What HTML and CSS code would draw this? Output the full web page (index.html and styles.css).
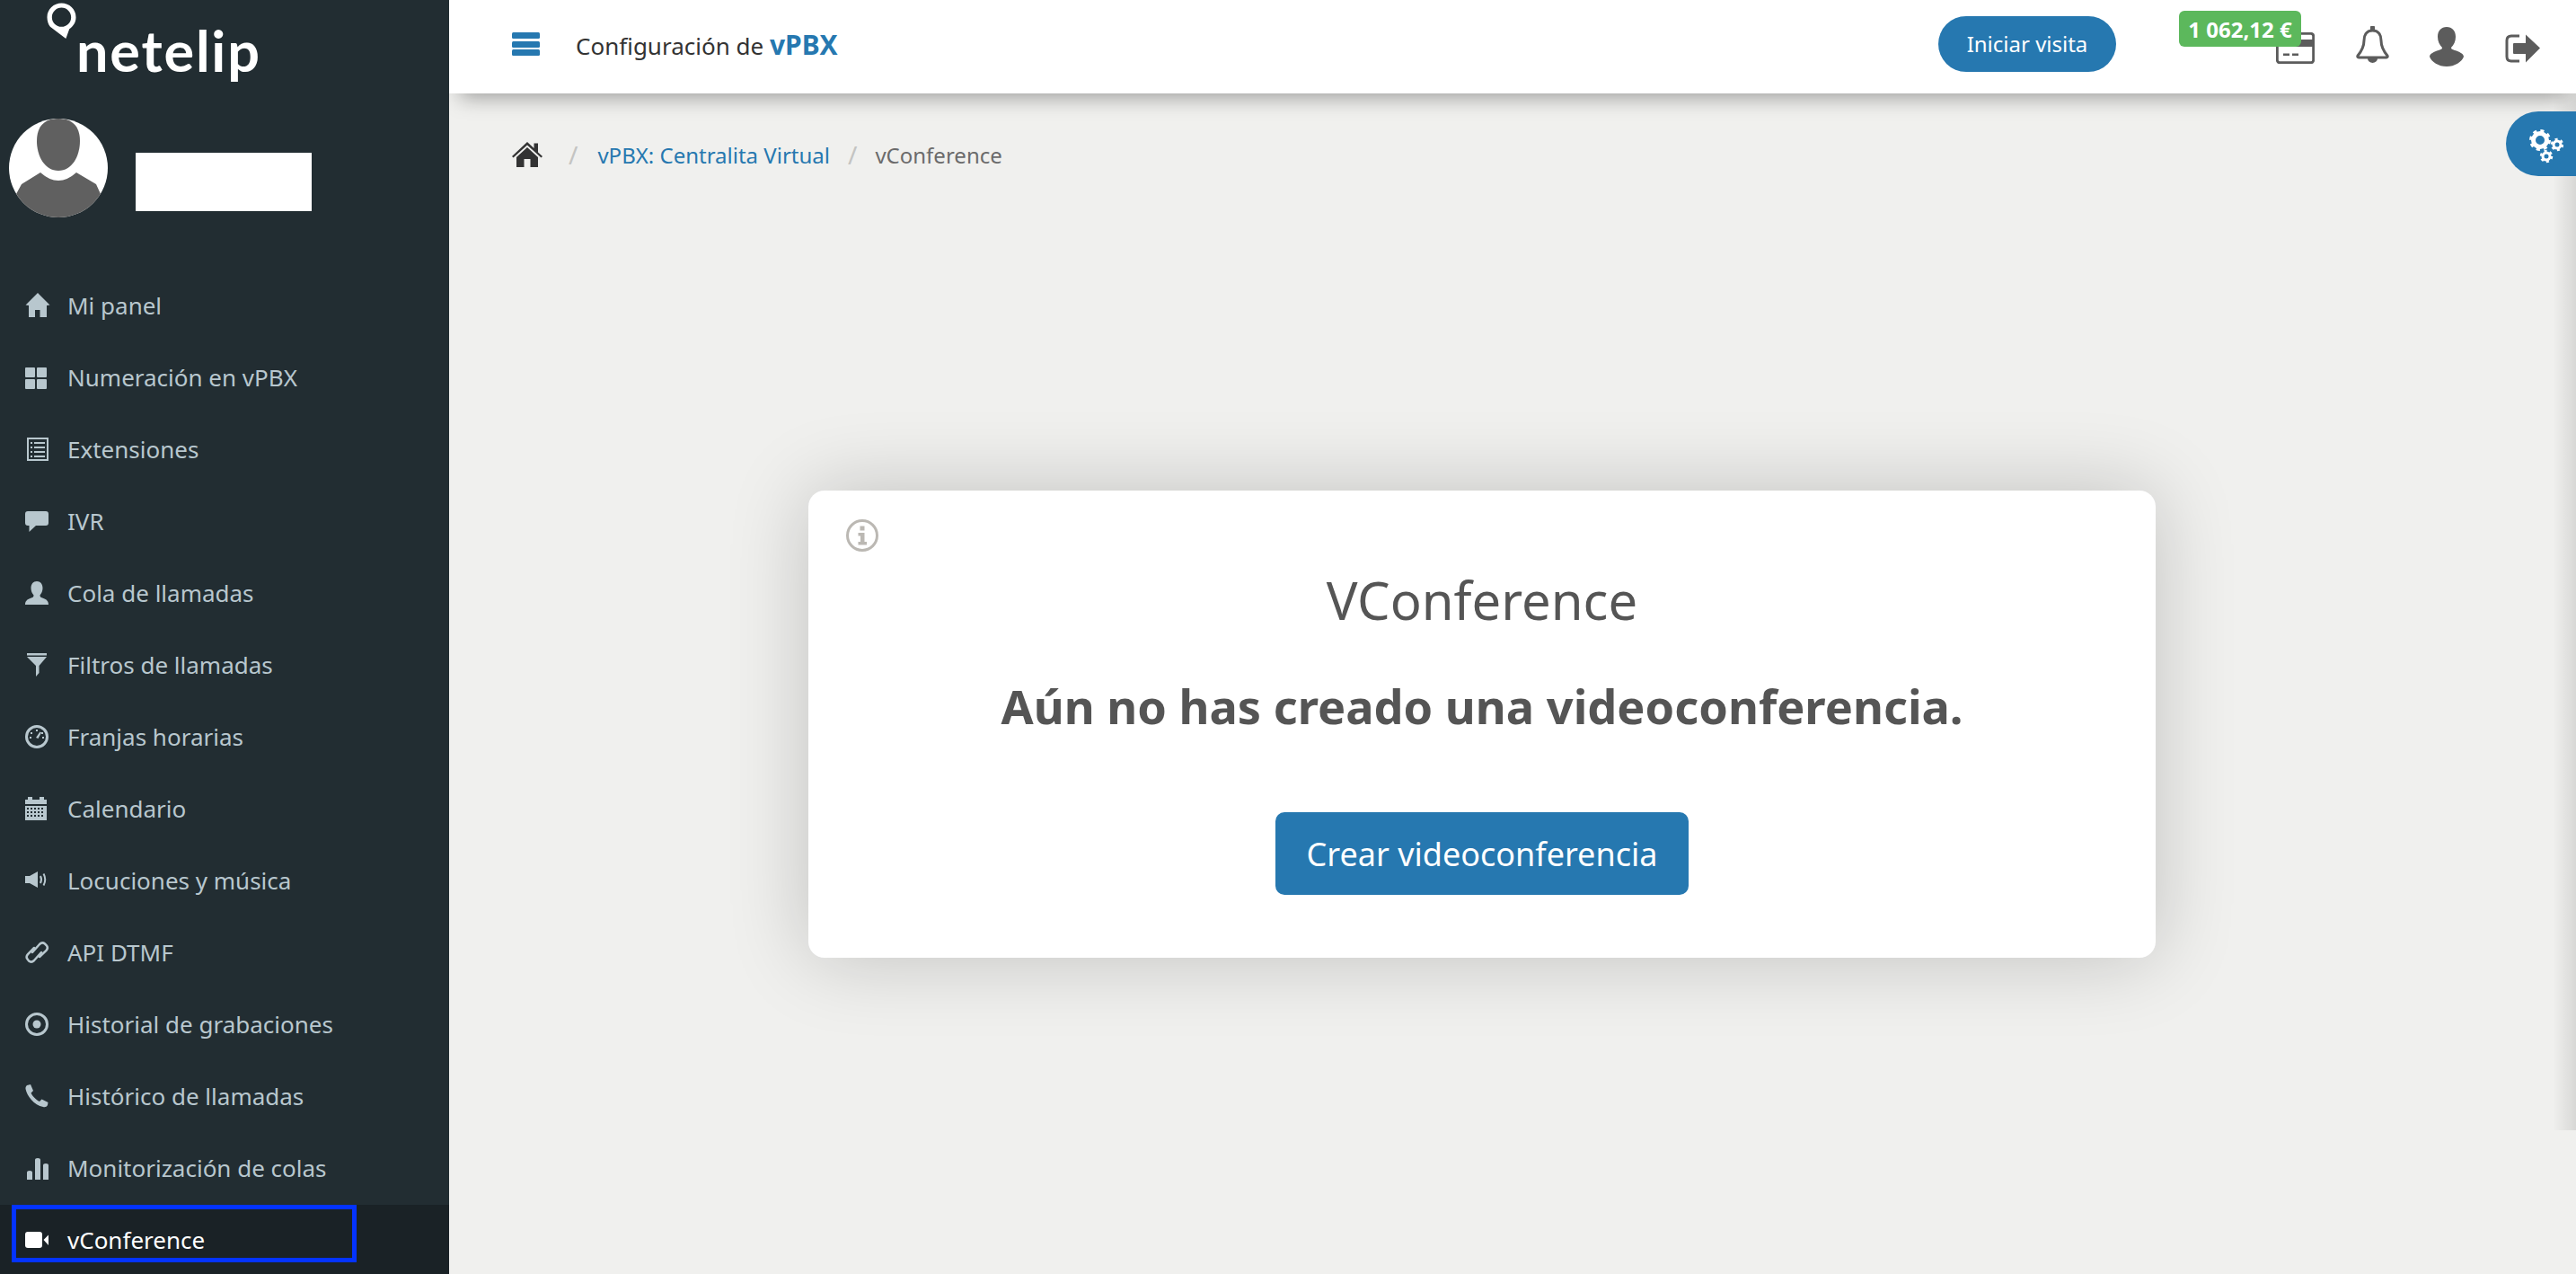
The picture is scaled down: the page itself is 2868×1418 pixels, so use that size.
FILE: index.html
```html
<!DOCTYPE html>
<html lang="es">
<head>
<meta charset="utf-8">
<title>vConference</title>
<link rel="stylesheet" href="styles.css">
</head>
<body>
<div class="app">
  <aside class="sidebar">
    <div class="logo">
      <svg class="logo-pin" viewBox="0 0 34 42"><path d="M17 0.500C26 0.500 33.500 7.500 33.500 16.500C33.500 23 30 27 26 30L22 41L4 27.500C2 24.500 0.500 21 0.500 16.500C0.500 7.500 8 0.500 17 0.500ZM17 5.500C11 5.500 6 10.500 6 16.500C6 22.500 11 27.500 17 27.500C23 27.500 28 22.500 28 16.500C28 10.500 23 5.500 17 5.500Z" fill-rule="evenodd"/></svg>
      <span class="logo-text">netelip</span>
    </div>
    <div class="user">
      <svg class="avatar" viewBox="0 0 110 110">
        <defs><clipPath id="avc"><circle cx="55" cy="55" r="55"/></clipPath></defs>
        <circle cx="55" cy="55" r="55" fill="#fff"/>
        <g clip-path="url(#avc)" fill="#606060">
          <path d="M31 25C31 8 40 0 55 0C70 0 79 8 79 25C79 42 70 58 55 58C40 58 31 42 31 25Z"/>
          <path d="M8 84L14 73L35 60Q55 78 75 60L97 73L102 84V110H8Z"/>
        </g>
      </svg>
      <div class="user-mask"></div>
    </div>
    <nav class="nav">
      <a class="nav-item"><svg class="ico" viewBox="0 0 28 28"><path d="M14 -1L27.500 12.500L24 13V26H16.500V18H11V26H4V13L0.500 12.500Z"/></svg><span>Mi panel</span></a>
      <a class="nav-item"><svg class="ico" viewBox="0 0 28 28"><rect x="0" y="2" width="11" height="11" rx="1"/><rect x="13" y="2" width="11" height="11" rx="1"/><rect x="0" y="15" width="11" height="11" rx="1"/><rect x="13" y="15" width="11" height="11" rx="1"/></svg><span>Numeración en vPBX</span></a>
      <a class="nav-item"><svg class="ico" viewBox="0 0 28 28"><path d="M2 0H26V26H2ZM4 2V24H24V2Z" fill-rule="evenodd"/><path d="M6 5h2v2h-2ZM10 5h12v2h-12ZM6 10h2v2h-2ZM10 10h12v2h-12ZM6 15h2v2h-2ZM10 15h12v2h-12ZM6 20h2v2h-2ZM10 20h12v2h-12Z"/></svg><span>Extensiones</span></a>
      <a class="nav-item"><svg class="ico" viewBox="0 0 28 28"><path d="M3 2H23A3 3 0 0 1 26 5V15A3 3 0 0 1 23 18H12L4.500 25V18H3A3 3 0 0 1 0 15V5A3 3 0 0 1 3 2Z"/></svg><span>IVR</span></a>
      <a class="nav-item"><svg class="ico" viewBox="0 0 28 28"><path d="M13 0C17 0 19.500 3 19.500 7.500C19.500 10.500 18.300 13.500 16.500 15.500C16.500 17.500 17.500 18 20.500 19S26 22 26 26H0C0 22 2.500 20 5.500 19S9.500 17.500 9.500 15.500C7.700 13.500 6.500 10.500 6.500 7.500C6.500 3 9 0 13 0Z"/></svg><span>Cola de llamadas</span></a>
      <a class="nav-item"><svg class="ico" viewBox="0 0 28 28"><path d="M2 0H24V2.500H2ZM2 4H24L15.500 14V22L12 26V14Z"/></svg><span>Filtros de llamadas</span></a>
      <a class="nav-item"><svg class="ico" viewBox="0 0 28 28"><path d="M13 0A13 13 0 1 1 13 26A13 13 0 1 1 13 0ZM13 3A10 10 0 1 0 13 23A10 10 0 1 0 13 3Z" fill-rule="evenodd"/><path d="M12 5h2v2h-2ZM6 8h2v2h-2ZM18 8h2v2h-2ZM5 13h2v2h-2ZM19 13h2v2h-2ZM16.500 7.500L18 8.500L14.500 15L12 14Z"/></svg><span>Franjas horarias</span></a>
      <a class="nav-item"><svg class="ico" viewBox="0 0 28 28"><path d="M0 3H3V0H8V3H16V0H21V3H24V8H0ZM0 10H24V26H0Z"/><path class="ico-cut" d="M2 13h20M2 17h20M2 21h20"/></svg><span>Calendario</span></a>
      <a class="nav-item"><svg class="ico" viewBox="0 0 28 28"><path d="M0 8H5L14 3V21L5 16H0Z"/><path class="ico-line" d="M17 8Q19 12 17 16M20.500 5.500Q24 12 20.500 18.500"/></svg><span>Locuciones y música</span></a>
      <a class="nav-item"><svg class="ico" viewBox="0 0 28 28"><path class="ico-line thick" d="M8 13L16 4Q19 1 22 3.500L24 5.500Q26 8 23.500 11L16 18"/><path class="ico-line thick" d="M18 13L10 22Q7 25 4 22.500L2.500 20.500Q0.500 18 3 15L10 8"/></svg><span>API DTMF</span></a>
      <a class="nav-item"><svg class="ico" viewBox="0 0 28 28"><path d="M13 0A13 13 0 1 1 13 26A13 13 0 1 1 13 0ZM13 3A10 10 0 1 0 13 23A10 10 0 1 0 13 3Z" fill-rule="evenodd"/><circle cx="13" cy="13" r="4.500"/></svg><span>Historial de grabaciones</span></a>
      <a class="nav-item"><svg class="ico" viewBox="0 0 28 28"><path d="M2 1L6 0L9 7L6.500 9.500C8 13 12 17 16 19L18.500 16.500L25.500 20L25 23C24 25 22 25.500 20 25C10 23 2 13 0.500 5C0.200 3 1 2 2 1Z"/></svg><span>Histórico de llamadas</span></a>
      <a class="nav-item"><svg class="ico" viewBox="0 0 28 28"><path d="M2 18Q2 16 5 16T8 18V26H2ZM11 4Q11 2 14 2T17 4V26H11ZM20 10Q20 8 23 8T26 10V26H20Z"/></svg><span>Monitorización de colas</span></a>
      <a class="nav-item active"><svg class="ico" viewBox="0 0 28 28"><rect x="0" y="4" width="19" height="18" rx="3"/><path d="M20.500 13L26 7.500V19Z"/></svg><span>vConference</span></a>
    </nav>
  </aside>

  <div class="main">
    <header class="topbar">
      <button class="menu-btn" aria-label="Menú"><i></i><i></i><i></i></button>
      <div class="page-title">Configuración de <b>vPBX</b></div>
      <a class="visit-btn">Iniciar visita</a>
      <div class="top-icons">
        <div class="wallet">
          <span class="balance">1 062,12 €</span>
          <svg class="ti-card" viewBox="0 0 43 35"><rect x="1.300" y="1.300" width="40.400" height="32.400" rx="3"/><path class="solid" d="M1 8H42V16H1ZM8 23.500H15V26H8ZM18 23.500H25V26H18Z"/></svg>
        </div>
        <svg class="ti-bell" viewBox="0 0 37 41"><path d="M18.500 5C11 5 9 11 9 16C9 23 7 27 2 33C1.500 34 2 35 3 35H34C35 35 35.500 34 35 33C30 27 28 23 28 16C28 11 26 5 18.500 5Z"/><path class="solid" d="M16 1.500A2.500 2.500 0 0 1 21 1.500V5H16ZM13 36H24A5.500 5 0 0 1 13 36Z"/></svg>
        <svg class="ti-user" viewBox="0 0 38 44"><path class="solid" d="M19 0C25 0 29 4 29 11C29 16 27 20 24 23C24 24.500 25 25 28 26C33 27.500 38 30 38 33C36 39 28 44 19 44S2 39 0 33C0 30 5 27.500 10 26C13 25 14 24.500 14 23C11 20 9 16 9 11C9 4 13 0 19 0Z"/></svg>
        <svg class="ti-out" viewBox="0 0 39 32"><path d="M16 2H7Q2 2 2 7V25Q2 30 7 30H16"/><path class="solid" d="M10 10H23V0.500L39 15.500L23 31.500V22H10Q9 22 9 21V11Q9 10 10 10Z"/></svg>
      </div>
    </header>

    <div class="content">
      <ol class="crumbs">
        <li><svg class="crumb-home" viewBox="0 0 34 28"><path d="M17 0L24.500 7V1.500H29V11.500L34 16L32.500 17.500L17 3.500L1.500 17.500L0 16ZM17 6L29 17V28H20.500V19H13.500V28H5V17Z"/></svg></li>
        <li class="sep">/</li>
        <li><a class="crumb-link">vPBX: Centralita Virtual</a></li>
        <li class="sep">/</li>
        <li class="crumb-cur">vConference</li>
      </ol>

      <section class="card">
        <svg class="info" viewBox="0 0 36 36"><circle cx="18" cy="18" r="16.500"/><path class="solid" d="M15.500 7.500h5v5h-5ZM13.500 15h7v10h2.500v3.500H13.500V25H16V18.500H13.500Z"/></svg>
        <h1 class="card-title">VConference</h1>
        <h2 class="card-msg">Aún no has creado una videoconferencia.</h2>
        <a class="create-btn">Crear videoconferencia</a>
      </section>
    </div>

    <div class="edge-shade"></div>
    <div class="gear-tab">
      <svg viewBox="0 0 38 38">
        <circle class="g-ring" cx="12" cy="12" r="7.500"/><circle class="g-teeth" cx="12" cy="12" r="10.500"/>
        <circle class="g-ring s" cx="31" cy="17" r="4"/><circle class="g-teeth s" cx="31" cy="17" r="6"/>
        <circle class="g-ring s" cx="19" cy="30" r="4"/><circle class="g-teeth s" cx="19" cy="30" r="6"/>
      </svg>
    </div>
  </div>
</div>
</body>
</html>
```
FILE: styles.css
```css
*, *::after { box-sizing: border-box; }
html, body { margin: 0; height: 100%; overflow: hidden; }
body { font-family: "Noto Sans", sans-serif; background: #f0f0ee; color: #555; }
a { text-decoration: none; color: inherit; }

.app { display: grid; grid-template-columns: 500px 1fr; height: 100vh; }

/* Sidebar */
.sidebar { background: #222d32; overflow: hidden; display: flex; flex-direction: column; height: 100vh; }
.logo { height: 134px; flex: none; padding-left: 52px; display: flex; align-items: flex-start; }
.logo-pin { width: 33px; height: 41px; margin-top: 3px; fill: #fff; flex: none; }
.logo-text { font-family: "Lato", sans-serif; font-weight: 700; font-size: 63px; line-height: 74px; margin-top: 19px; color: #fff; letter-spacing: 1.800px; }
.user { height: 167px; flex: none; padding-left: 10px; display: flex; align-items: flex-start; }
.avatar { width: 110px; height: 110px; flex: none; margin-top: -2px; }
.user-mask { width: 196px; height: 65px; background: #fff; margin: 36px 0 0 31px; }

.nav { display: flex; flex-direction: column; flex: none; }
.nav-item { height: 80px; flex: none; display: flex; align-items: center; gap: 19px; padding-left: 28px; font-size: 26px; color: #b8c7ce; position: relative; }
.nav-item span { margin-bottom: 3px; }
.ico { width: 28px; height: 28px; flex: none; fill: currentColor; overflow: visible; }
.ico-cut { fill: none; stroke: #222d32; stroke-width: 2; stroke-dasharray: 2 2; }
.ico-line { fill: none; stroke: currentColor; stroke-width: 2; }
.ico-line.thick { stroke-width: 2.500; stroke-linecap: round; }
.nav-item.active { background: #1a2226; color: #fff; }
.nav-item.active::after { content: ""; position: absolute; left: 13px; top: 0; width: 384px; height: 64px; border: 5px solid #0433ff; }

/* Main */
.main { position: relative; display: flex; flex-direction: column; min-width: 0; overflow: hidden; }
.topbar { height: 104px; flex: none; background: #fff; display: flex; align-items: center; padding-left: 70px; position: relative; z-index: 2; box-shadow: 0 16px 22px -12px rgba(0,0,0,.36); }
.menu-btn { width: 31px; height: 26px; padding: 0; border: 0; background: none; display: flex; flex-direction: column; justify-content: space-between; margin: -6px 40px 0 0; flex: none; }
.menu-btn i { display: block; height: 7px; border-radius: 1.500px; background: #2678b0; }
.page-title { font-size: 26px; color: #333; position: relative; top: -1px; }
.page-title b { color: #2678b0; font-weight: 700; font-size: 30px; line-height: 1; }
.visit-btn { margin-left: auto; width: 198px; height: 62px; margin-top: -6px; padding-bottom: 2px; border-radius: 31px; background: #2678b0; color: #fff; font-size: 24px; display: flex; align-items: center; justify-content: center; }
.top-icons { display: flex; align-items: flex-start; align-self: flex-start; margin: 0 40px 0 178px; position: relative; }
.wallet { width: 43px; height: 35px; margin: 36px 46px 0 0; position: relative; }
.balance { position: absolute; right: 15px; top: -24px; width: 136px; height: 40px; background: #5cb85c; color: #fff; font-weight: 700; font-size: 24px; border-radius: 6px; display: flex; align-items: center; justify-content: center; z-index: 1; white-space: nowrap; }
.ti-card, .ti-bell, .ti-out { fill: none; stroke: #5c5c5c; stroke-width: 3; }
.solid { fill: #5c5c5c; stroke: none; }
.ti-card { width: 43px; height: 35px; display: block; }
.ti-bell { width: 37px; height: 41px; margin: 29px 45px 0 0; }
.ti-user { width: 38px; height: 44px; margin: 30px 46px 0 0; }
.ti-out { width: 39px; height: 32px; margin-top: 38px; }

.content { flex: 1; min-height: 0; }
.crumbs { list-style: none; margin: 0; padding: 24px 0 0 70px; display: flex; align-items: center; font-size: 24px; height: 112px; }
.crumbs li { flex: none; }
.crumb-home { width: 34px; height: 28px; fill: #333; display: block; margin-top: -1px; }
.sep { color: #c4c4c2; margin: 0 22px 0 29px; font-size: 28px; line-height: 1; }
.crumbs .sep:nth-child(4) { margin: 0 20px 0 20px; }
.crumb-link { color: #2678b0; }
.crumb-cur { color: #6b6b6b; }

.card { width: 1500px; height: 520px; margin: 330px 0 0 400px; background: #fff; border-radius: 18px; box-shadow: 0 0 90px rgba(0,0,0,.2); display: flex; flex-direction: column; align-items: center; position: relative; }
.info { position: absolute; left: 42px; top: 32px; width: 36px; height: 36px; fill: none; stroke: #bbb8b3; stroke-width: 3; }
.info .solid { fill: #bbb8b3; }
.card-title { margin: 80px 0 0; font-weight: 400; font-size: 58px; line-height: 84px; color: #555; }
.card-msg { margin: 39px 0 0; font-weight: 700; font-size: 52.300px; line-height: 74px; color: #555; }
.create-btn { margin-top: 81px; width: 460px; height: 92px; flex: none; background: #2678b0; color: #fff; font-size: 36px; border-radius: 10px; display: flex; align-items: center; justify-content: center; }

.edge-shade { position: absolute; right: 0; top: 104px; width: 26px; height: 1154px; background: linear-gradient(to right, rgba(0,0,0,0), rgba(0,0,0,.1)); }
.gear-tab { position: absolute; right: 0; top: 124px; width: 78px; height: 72px; background: #2678b0; border-radius: 36px 0 0 36px; z-index: 3; padding: 20px 0 0 26px; }
.gear-tab svg { display: block; width: 38px; height: 38px; fill: none; stroke: #fff; }
.g-ring { stroke-width: 5; }
.g-ring.s { stroke-width: 3; }
.g-teeth { stroke-width: 3; stroke-dasharray: 4.100 4.150; }
.g-teeth.s { stroke-width: 2.500; stroke-dasharray: 3 3.280; }
```
